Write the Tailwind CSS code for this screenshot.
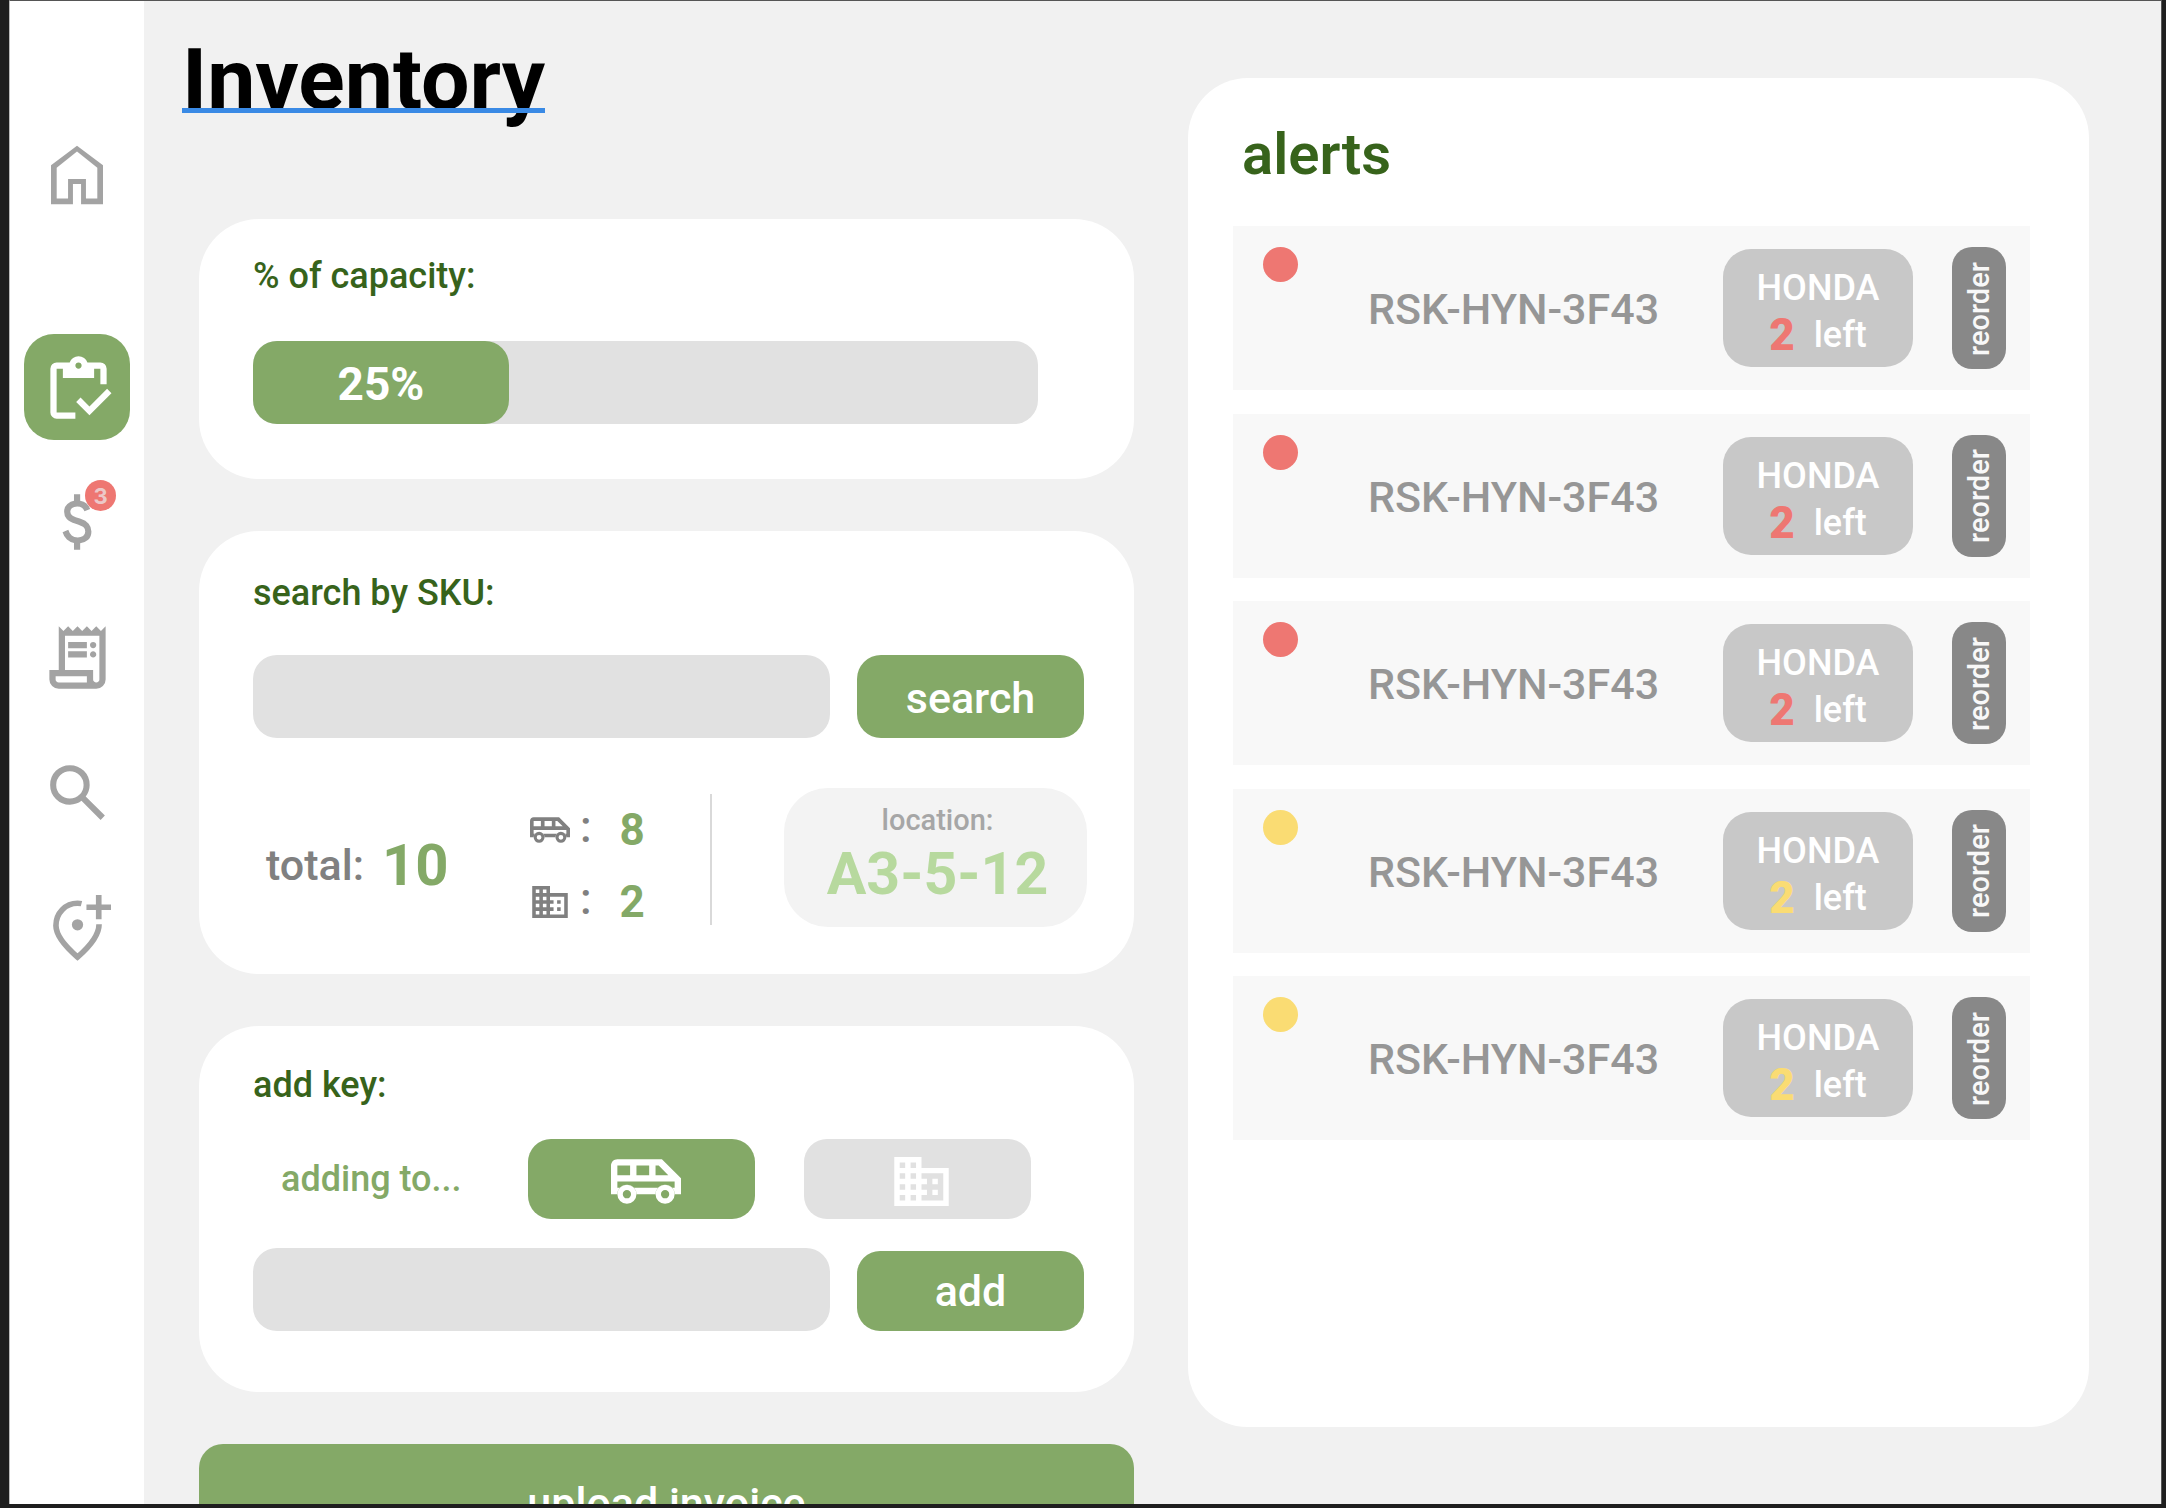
<!DOCTYPE html>
<html lang="en">
<head>
<meta charset="utf-8">
<meta name="viewport" content="width=device-width, initial-scale=1">
<title>Inventory</title>
<script src="https://cdn.jsdelivr.net/npm/@tailwindcss/browser@4"></script>
</head>
<body class="bg-[#1e1e1e] font-[Roboto,sans-serif] font-medium">
<svg class="hidden" aria-hidden="true">
  <symbol id="van" viewBox="1 5 22 14">
    <path fill="currentColor" fill-rule="evenodd" d="M17 5H3c-1.100 0-2 .89-2 2v9h2a3 3 0 0 1 6 0h6a3 3 0 0 1 6 0h2v-5zM3 7h4v3H3zM9 7h4v3H9zM15 7h1l3 3h-4zM3 12H21V14H20.240A3 3 0 0 0 15.760 14H8.240A3 3 0 0 0 3.760 14H3z"/>
    <circle cx="6" cy="16" r="2.150" fill="none" stroke="currentColor" stroke-width="1.700"/>
    <circle cx="18" cy="16" r="2.150" fill="none" stroke="currentColor" stroke-width="1.700"/>
  </symbol>
  <symbol id="building" viewBox="2 3 20 18">
    <path fill="currentColor" d="M12 7V3H2v18h20V7H12zM6 19H4v-2h2v2zm0-4H4v-2h2v2zm0-4H4V9h2v2zm0-4H4V5h2v2zm4 12H8v-2h2v2zm0-4H8v-2h2v2zm0-4H8V9h2v2zm0-4H8V5h2v2zm10 12h-8v-2h2v-2h-2v-2h2v-2h-2V9h8v10zm-2-8h-2v2h2v-2zm0 4h-2v2h2v-2z"/>
  </symbol>
</svg>

<div class="h-screen pl-[9px] pr-1 pb-1">
<div class="flex h-full overflow-hidden border-t border-l border-r border-t-[#555] border-l-[#bbb] border-r-[#555] bg-[#f1f1f1]">

  <nav aria-label="Main" class="flex w-[134px] shrink-0 flex-col items-center bg-white pt-[138px] text-[#a3a3a3]">
    <a href="#home" aria-label="Home" class="flex h-[72px] items-center justify-center">
      <svg class="size-[78px] shrink-0" viewBox="0 -960 960 960" fill="currentColor"><path d="M230-190h140v-240h220v240h140v-380L480-770 230-570v380Zm-70 70v-480l320-240 320 240v480H530v-250H430v250H160Zm320-350Z"/></svg>
    </a>
    <a href="#inventory" aria-label="Inventory" aria-current="page" class="mt-[123px] flex size-[106px] items-center justify-center rounded-[30px] bg-[#84a967] pt-1.5 pl-0.5 text-white">
      <svg class="size-[75px] shrink-0" viewBox="0 -960 960 960" fill="currentColor"><path d="M620-163 450-333l56-56 114 114 226-226 56 56-282 282Zm220-397h-80v-200h-80v120H280v-120h-80v560h240v80H200q-33 0-56.500-23.500T120-200v-560q0-33 23.500-56.500T200-840h167q11-35 43-57.500t70-22.500q40 0 71.500 22.500T594-840h166q33 0 56.500 23.500T840-760v200ZM480-760q17 0 28.500-11.500T520-800q0-17-11.500-28.500T480-840q-17 0-28.500 11.500T440-800q0 17 11.500 28.500T480-760Z"/></svg>
    </a>
    <div class="mt-[46px] flex flex-col items-center gap-[63px]">
      <a href="#sales" aria-label="Sales, 3 new" class="relative flex size-[72px] items-center justify-center">
        <svg class="size-[74px] shrink-0" viewBox="0 -960 960 960" fill="currentColor"><path d="M441-120v-86q-53-12-91.500-46T293-348l74-30q15 48 44.500 73t77.500 25q41 0 69.500-18.500T587-356q0-35-22-55.500T463-458q-86-27-118-64.500T313-614q0-65 42-101t86-41v-84h80v84q50 8 82.500 36.500T651-650l-74 32q-12-32-34-48t-60-16q-44 0-67 19.500T393-614q0 33 30 52t104 40q69 20 104.500 63.500T667-358q0 71-42 108t-104 46v84h-80Z"/></svg>
        <span class="absolute -top-1.5 left-11 flex size-[31px] items-center justify-center rounded-full bg-[#ee7772] font-[Inter,sans-serif] text-[22px] leading-none font-bold text-[#ecc8c8]">3</span>
      </a>
      <a href="#invoices" aria-label="Invoices" class="flex size-[72px] items-center justify-center">
        <svg class="size-[75px] shrink-0" viewBox="0 -960 960 960" fill="currentColor"><path d="M240-80q-50 0-85-35t-35-85v-120h120v-560l60 60 60-60 60 60 60-60 60 60 60-60 60 60 60-60 60 60 60-60v680q0 50-35 85t-85 35H240Zm480-80q17 0 28.500-11.500T760-200v-560H320v440h360v120q0 17 11.500 28.500T720-160ZM360-600v-80h240v80H360Zm0 120v-80h240v80H360Zm320-120q-17 0-28.500-11.500T640-640q0-17 11.500-28.500T680-680q17 0 28.500 11.500T720-640q0 17-11.500 28.500T680-600Zm0 120q-17 0-28.500-11.500T640-520q0-17 11.500-28.500T680-560q17 0 28.500 11.500T720-520q0 17-11.500 28.500T680-480ZM240-160h360v-80H200v40q0 17 11.500 28.500T240-160Z"/></svg>
      </a>
      <a href="#search" aria-label="Search" class="flex size-[72px] items-center justify-center">
        <svg class="size-[73px] shrink-0" viewBox="0 -960 960 960" fill="currentColor"><path d="M784-120 532-372q-30 24-69 38t-83 14q-109 0-184.500-75.500T120-580q0-109 75.500-184.500T380-840q109 0 184.500 75.500T640-580q0 44-14 83t-38 69l252 252-56 56ZM380-400q75 0 127.500-52.500T560-580q0-75-52.500-127.500T380-760q-75 0-127.500 52.500T200-580q0 75 52.500 127.500T380-400Z"/></svg>
      </a>
      <a href="#locations" aria-label="Add location" class="flex size-[72px] items-center justify-center">
        <svg class="h-[69px] w-[67px] shrink-0" viewBox="0 0 202 208" fill="none" stroke="currentColor" stroke-width="17"><path d="M113 32Q109 31 101 31C65 31 36 60 36 98C36 124 57 155 101 193C145 155 166 124 166 94"/><circle cx="101" cy="96" r="17" fill="currentColor" stroke="none"/><path d="M165 6V79M128 43H202"/></svg>
      </a>
    </div>
  </nav>

  <main class="grid min-w-0 flex-1 grid-cols-[935fr_901fr] grid-rows-[minmax(0,1fr)] gap-x-[54px] pr-[72px] pl-[55px]">
    <div class="flex min-w-0 flex-col items-stretch pt-[37px]">
      <h1 class="relative -ml-[17px] self-start text-[86px] leading-[84px] font-bold text-black">Inventory<span class="absolute inset-x-0 top-[70px] h-[5px] bg-[#3a8ae5]"></span></h1>

      <div class="mt-[97px] flex flex-col gap-[52px]">
        <section class="rounded-[60px] bg-white pt-[35px] pr-[50px] pb-[55px] pl-[54px]">
          <h2 id="cap" class="text-[36px] leading-[44px] text-[#37631b]">% of capacity:</h2>
          <div role="progressbar" aria-labelledby="cap" aria-valuenow="25" aria-valuemin="0" aria-valuemax="100" class="mt-[43px] mr-[46px] h-[83px] rounded-[24px] bg-[#e1e1e1]">
            <div class="flex h-full items-center justify-center rounded-[24px] bg-[#84a967] pt-0.5 text-[46px] leading-[50px] font-bold text-white" style="width:32.6%">25%</div>
          </div>
        </section>

        <section class="rounded-[60px] bg-white pt-[40px] pr-[50px] pb-[47px] pl-[54px]">
          <form>
            <label for="sku" class="block text-[36px] leading-[44px] text-[#37631b]">search by SKU:</label>
            <div class="mt-[40px] flex gap-[27px]">
              <input id="sku" type="text" class="h-[83px] min-w-0 flex-1 rounded-[24px] bg-[#e1e1e1] px-6 text-[36px] outline-none">
              <button type="button" class="h-[83px] w-[227px] rounded-[24px] bg-[#84a967] pt-0.5 text-[43px] leading-[50px] text-white">search</button>
            </div>
          </form>
          <div class="mt-[50px] -mr-[3px] flex h-[139px] items-center text-[#808080]">
            <div class="mt-[14px] flex w-[264px] shrink-0 items-center gap-[18px] pl-[13px] text-[43px] leading-[60px] whitespace-nowrap">total: <span class="text-[58px] font-bold text-[#84a967]">10</span></div>
            <dl class="mt-[16px] ml-[13px] text-[44px] leading-[72px]">
              <div class="flex items-center"><dt class="flex items-center gap-2.5"><svg class="h-[26px] w-10" role="img" aria-label="van"><use href="#van"/></svg><span class="mb-1.5 leading-[60px]">:</span></dt><dd class="ml-[28px] font-bold text-[#84a967]">8</dd></div>
              <div class="flex items-center"><dt class="flex items-center gap-2.5"><svg class="h-8 w-10" role="img" aria-label="warehouse"><use href="#building"/></svg><span class="mb-1.5 leading-[60px]">:</span></dt><dd class="ml-[28px] font-bold text-[#84a967]">2</dd></div>
            </dl>
            <div class="mt-1 ml-[65px] h-[131px] w-0.5 bg-[#d9d9d9]"></div>
            <div class="ml-auto flex h-full w-[303px] flex-col items-center rounded-[44px] bg-[#f3f3f3] pt-[14px] pl-1">
              <span class="text-[29px] leading-[36px] text-[#a6a6a6]">location:</span>
              <span class="text-[59px] leading-[72px] font-bold text-[#b7d99e]">A3-5-12</span>
            </div>
          </div>
        </section>

        <section class="rounded-[60px] bg-white pt-[37px] pr-[50px] pb-[61px] pl-[54px]">
          <form>
            <label for="key" class="block text-[36px] leading-[44px] text-[#37631b]">add key:</label>
            <div class="mt-[32px] flex items-center">
              <span class="w-[275px] pl-7 text-[36px] leading-[44px] text-[#84a967]">adding to...</span>
              <button type="button" aria-label="Van" aria-pressed="true" class="flex h-20 w-[227px] items-center justify-center rounded-[23px] bg-[#84a967] pt-1 pl-2 text-white"><svg class="h-[45px] w-[70px]"><use href="#van"/></svg></button>
              <button type="button" aria-label="Warehouse" aria-pressed="false" class="ml-[49px] flex h-20 w-[227px] items-center justify-center rounded-[23px] bg-[#e1e1e1] pt-1 pl-2 text-white"><svg class="h-[49px] w-[55px]"><use href="#building"/></svg></button>
            </div>
            <div class="mt-[29px] flex items-end gap-[27px]">
              <input id="key" type="text" class="h-[83px] min-w-0 flex-1 rounded-[24px] bg-[#e1e1e1] px-6 text-[36px] outline-none">
              <button type="button" class="h-20 w-[227px] rounded-[23px] bg-[#84a967] text-[43px] leading-[50px] text-white">add</button>
            </div>
          </form>
        </section>

        <button type="button" class="h-[118px] shrink-0 rounded-[24px] bg-[#84a967] text-[43px] leading-[50px] text-white">upload invoice</button>
      </div>
    </div>

    <section class="my-[77px] min-w-0 rounded-[60px] bg-white pt-[46px] pr-[59px] pl-[45px]">
      <h2 class="pl-[9px] text-[58px] leading-[60px] font-semibold text-[#37631b]">alerts</h2>
      <ul id="alerts" class="mt-[42px] flex min-h-[914px] flex-col justify-between"></ul>
    </section>
  </main>
</div>
</div>

<template id="alert">
  <li class="flex h-[164px] items-center bg-[#f8f8f8] pr-6 pl-[30px]">
    <span data-dot class="mt-[21px] size-[35px] shrink-0 self-start rounded-full"></span>
    <span data-sku class="ml-[70px] pt-0.5 text-[43px] leading-[50px] whitespace-nowrap text-[#969696]"></span>
    <div class="ml-auto flex h-[118px] w-[190px] shrink-0 flex-col items-center justify-center rounded-[28px] bg-[#c8c8c8] pt-2 text-[36px] leading-[47px] text-white">
      <span data-make></span>
      <span class="flex items-center gap-[19px]"><b data-count class="text-[44px] leading-[47px] font-black"></b>left</span>
    </div>
    <button type="button" class="ml-[39px] flex h-[122px] w-[54px] shrink-0 items-center justify-center rounded-[20px] bg-[#888] pt-0.5 text-[29px] text-[#f8f8f8]"><span class="rotate-180 leading-[36px] [writing-mode:vertical-rl]">reorder</span></button>
  </li>
</template>
<script>
  const alerts = [
    { sku: 'RSK-HYN-3F43', make: 'HONDA', left: 2, level: 'high' },
    { sku: 'RSK-HYN-3F43', make: 'HONDA', left: 2, level: 'high' },
    { sku: 'RSK-HYN-3F43', make: 'HONDA', left: 2, level: 'high' },
    { sku: 'RSK-HYN-3F43', make: 'HONDA', left: 2, level: 'low' },
    { sku: 'RSK-HYN-3F43', make: 'HONDA', left: 2, level: 'low' },
  ];
  const tones = { high: ['bg-[#ee7772]', 'text-[#ee7772]'], low: ['bg-[#fadc73]', 'text-[#fadc73]'] };
  const template = document.getElementById('alert');
  for (const a of alerts) {
    const row = template.content.cloneNode(true);
    const [bg, text] = tones[a.level];
    row.querySelector('[data-dot]').classList.add(bg);
    row.querySelector('[data-sku]').textContent = a.sku;
    row.querySelector('[data-make]').textContent = a.make;
    const count = row.querySelector('[data-count]');
    count.textContent = a.left;
    count.classList.add(text);
    document.getElementById('alerts').append(row);
  }
</script>
</body>
</html>
